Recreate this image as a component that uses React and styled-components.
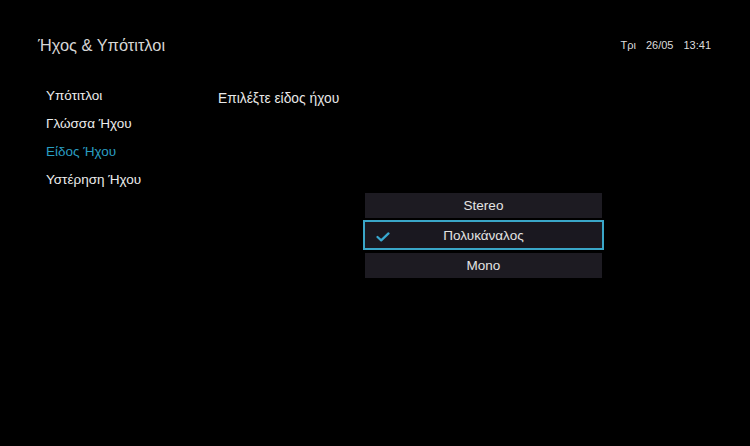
import React from "react";
import styled, { createGlobalStyle } from "styled-components";

const GlobalStyle = createGlobalStyle`
  html, body {
    margin: 0;
    padding: 0;
    background: #000;
  }
  body {
    font-family: "Liberation Sans", Arial, sans-serif;
    color: #e6e6e6;
  }
`;

const menu = ["Υπότιτλοι", "Γλώσσα Ήχου", "Είδος Ήχου", "Υστέρηση Ήχου"];
const options = ["Stereo", "Πολυκάναλος", "Mono"];

function App() {
  const activeMenu = 2;
  const selected = 1;

  return (
    <>
      <GlobalStyle />
      <Screen>
        <Header>
          <Title>Ήχος &amp; Υπότιτλοι</Title>
          <Clock>
            <span>Τρι</span>
            <span>26/05</span>
            <span>13:41</span>
          </Clock>
        </Header>
        <Body>
          <Menu>
            {menu.map((item, i) => (
              <MenuItem key={item} $active={i === activeMenu}>
                {item}
              </MenuItem>
            ))}
          </Menu>
          <Content>
            <Heading>Επιλέξτε είδος ήχου</Heading>
            <OptionList>
              {options.map((opt, i) =>
                i === selected ? (
                  <SelectedOption key={opt}>
                    <Check viewBox="0 0 14 10">
                      <path d="M1.5 5 L5.2 8.4 L12.5 1.4" />
                    </Check>
                    {opt}
                  </SelectedOption>
                ) : (
                  <Option key={opt}>{opt}</Option>
                )
              )}
            </OptionList>
          </Content>
        </Body>
      </Screen>
    </>
  );
}

export default App;

const Screen = styled.div`
  width: 750px;
  height: 446px;
  background: #000;
  overflow: hidden;
`;

const Header = styled.header`
  display: flex;
  justify-content: space-between;
  align-items: center;
  padding: 34px 38px 0 38px;
  height: 22px;
`;

const Title = styled.h1`
  margin: 0;
  font-size: 16.4px;
  font-weight: normal;
  line-height: 22px;
  color: #d6d6d6;
`;

const Clock = styled.div`
  display: flex;
  gap: 10px;
  font-size: 11px;
  color: #dcdcdc;
  padding-right: 1px;
`;

const Body = styled.div`
  display: flex;
  margin-top: 26px;
`;

const Menu = styled.ul`
  list-style: none;
  margin: 0;
  padding: 0 0 0 46px;
  width: 172px;
`;

const MenuItem = styled.li`
  font-size: 13.5px;
  line-height: 28px;
  color: ${(p) => (p.$active ? "#2a9ec2" : "#ececec")};
`;

const Content = styled.div`
  display: flex;
  flex-direction: column;
`;

const Heading = styled.div`
  margin-top: 3px;
  font-size: 13.8px;
  line-height: 28px;
  color: #e8e8e8;
`;

const OptionList = styled.div`
  display: flex;
  flex-direction: column;
  margin: 80px 0 0 147px;
  width: 237px;
`;

const Option = styled.div`
  height: 25px;
  display: flex;
  align-items: center;
  justify-content: center;
  background: #1d1b22;
  font-size: 13.5px;
  color: #e4e4e4;
`;

const SelectedOption = styled(Option)`
  position: relative;
  box-sizing: border-box;
  height: 30px;
  margin: 2px -2px 3px;
  border: 2px solid #3aa6c8;
  background: #1a1820;
`;

const Check = styled.svg`
  position: absolute;
  left: 11px;
  top: 10px;
  width: 14px;
  height: 10px;
  fill: none;
  stroke: #38a8d0;
  stroke-width: 2.2;
  stroke-linecap: round;
  stroke-linejoin: round;
`;
